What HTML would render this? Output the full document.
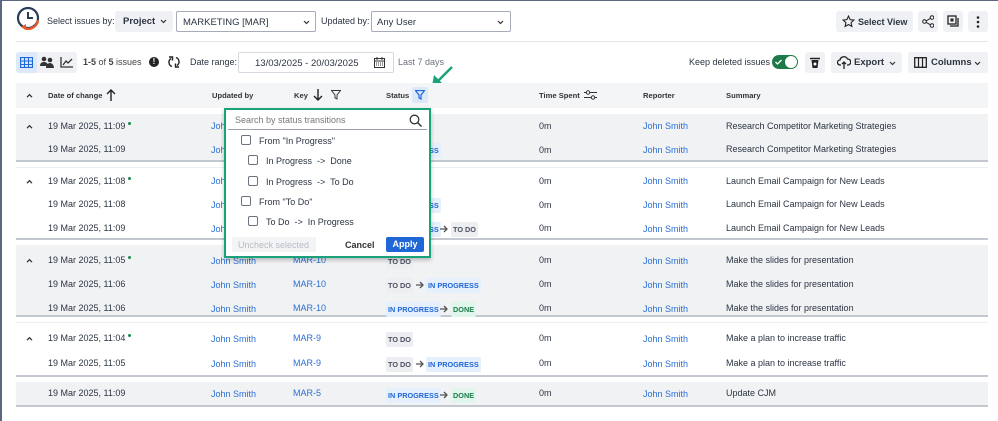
<!DOCTYPE html>
<html><head><meta charset="utf-8"><style>
*{box-sizing:border-box;margin:0;padding:0}
body{width:998px;height:421px;overflow:hidden;background:#fff;font-family:"Liberation Sans",sans-serif;color:#2b3442;font-size:9px;position:relative}
.a{position:absolute;white-space:nowrap}
.btn{position:absolute;background:#f0f1f4;border-radius:3px}
.sel{position:absolute;border:1px solid #a6acb8;border-radius:2px;background:#fff;height:21px}
.g{position:absolute;left:16px;width:972px;border-bottom:2px solid #c3c7cf}
.gray{background:#f1f2f4}
.lnk{color:#2a6fd6}
.b{position:absolute;font-size:7.3px;font-weight:bold;padding:3px 2px;border-radius:2px;white-space:nowrap;line-height:9px}
.td{background:#eceef1;color:#4a5160}
.ip{background:#e6f0fd;color:#1f66d6}
.dn{background:#e1f6ea;color:#1b7e4b}
.dot{display:inline-block;width:3px;height:3px;border-radius:50%;background:#1b8a4f;vertical-align:top;margin-left:3px;margin-top:1px}
.chev{position:absolute}
.h{position:absolute;font-size:7.6px;font-weight:bold;color:#333;white-space:nowrap}
.cb{display:inline-block;width:10px;height:10px;border:1.3px solid #6b7280;border-radius:2px;vertical-align:-1px;margin-right:8px}
.ar{position:absolute}
</style></head><body>
<div class="a" style="left:0;top:0;width:2px;height:421px;background:#5d6780"></div>
<div class="a" style="left:0;top:0;width:998px;height:1px;background:#5d6780"></div>
<svg width="0" height="0" style="position:absolute"><defs>
<symbol id="arr" viewBox="0 0 10 10"><path d="M1 5h7M5 2l3 3-3 3" fill="none" stroke="#555" stroke-width="1.3"/></symbol>
<symbol id="chv" viewBox="0 0 8 6"><path d="M1 5l3-3 3 3" fill="none" stroke="#333" stroke-width="1.5"/></symbol>
</defs></svg>
<!-- logo -->
<svg class="a" style="left:15px;top:6px" width="28" height="28" viewBox="0 0 28 28"><circle cx="13" cy="12" r="10" fill="none" stroke="#2b3b5c" stroke-width="2.2"/><path d="M13 6v6h5" fill="none" stroke="#2b3b5c" stroke-width="2"/><path d="M23 14 A10 10 0 0 1 9 22" fill="none" stroke="#e8582a" stroke-width="2.4"/><path d="M6 21l5-3v6z" fill="#e8582a"/></svg>
<div class="a" style="left:47px;top:16px">Select issues by:</div>
<div class="btn" style="left:115px;top:11px;width:58px;height:21px"><span class="a" style="left:8px;top:5px;font-weight:bold;font-size:9.5px">Project</span><svg class="a" style="left:45px;top:8px" width="7" height="5"><path d="M1 1l2.5 2.5L6 1" fill="none" stroke="#333" stroke-width="1.2"/></svg></div>
<div class="sel" style="left:176px;top:11px;width:140px"><span class="a" style="left:6px;top:5px;font-size:9.5px">MARKETING [MAR]</span><svg class="a" style="left:126px;top:8px" width="7" height="5"><path d="M1 1l2.5 2.5L6 1" fill="none" stroke="#333" stroke-width="1.2"/></svg></div>
<div class="a" style="left:321px;top:16px">Updated by:</div>
<div class="sel" style="left:371px;top:11px;width:140px"><span class="a" style="left:5px;top:5px;font-size:9.5px">Any User</span><svg class="a" style="left:125px;top:8px" width="7" height="5"><path d="M1 1l2.5 2.5L6 1" fill="none" stroke="#333" stroke-width="1.2"/></svg></div>
<div class="btn" style="left:836px;top:11px;width:77px;height:21px"><svg class="a" style="left:6px;top:4px" width="13" height="13" viewBox="0 0 24 24"><path d="M12 2l3 6.5 7 .8-5.2 4.8 1.4 7L12 17.6 5.8 21.1l1.4-7L2 9.3l7-.8z" fill="none" stroke="#222" stroke-width="2"/></svg><span class="a" style="left:22px;top:6px;font-weight:bold">Select View</span></div>
<div class="btn" style="left:918px;top:11px;width:20px;height:21px"><svg class="a" style="left:4px;top:4px" width="12" height="13"><circle cx="10" cy="2.5" r="1.8" fill="none" stroke="#222"/><circle cx="2.5" cy="6.5" r="1.8" fill="none" stroke="#222"/><circle cx="10" cy="10.5" r="1.8" fill="none" stroke="#222"/><path d="M4 6L8.5 3.3M4 7.3L8.5 9.8" stroke="#222"/></svg></div>
<div class="btn" style="left:943px;top:11px;width:20px;height:21px"><svg class="a" style="left:4px;top:4px" width="12" height="13"><rect x="1" y="1" width="8" height="8" fill="none" stroke="#222" stroke-width="1.3"/><path d="M11 3v8H3" fill="none" stroke="#222" stroke-width="1.3"/><rect x="3.5" y="3.5" width="3" height="3" fill="#222"/></svg></div>
<div class="btn" style="left:968px;top:11px;width:20px;height:21px"><svg class="a" style="left:8px;top:5px" width="4" height="12"><circle cx="2" cy="1.5" r="1.3" fill="#222"/><circle cx="2" cy="6" r="1.3" fill="#222"/><circle cx="2" cy="10.5" r="1.3" fill="#222"/></svg></div>
<div class="a" style="left:16px;top:41px;width:972px;height:1px;background:#e4e6ea"></div>
<!-- toolbar 2 -->
<div class="btn" style="left:16px;top:52px;width:61px;height:21px"></div>
<div class="a" style="left:16px;top:52px;width:21px;height:21px;background:#dde8fb;border-radius:3px"></div>
<svg class="a" style="left:20px;top:57px" width="13" height="11"><rect x="0.5" y="0.5" width="12" height="10" fill="none" stroke="#1f66d6" stroke-width="1.2"/><path d="M4.5 0v11M8.5 0v11M0 4h13M0 7.5h13" stroke="#1f66d6"/></svg>
<svg class="a" style="left:40px;top:56px" width="14" height="12"><circle cx="4" cy="3" r="2.3" fill="#333"/><circle cx="10" cy="4" r="2.3" fill="#333"/><path d="M0 10c0-3 2-4 4-4s4 1 4 4zM6 12c0-3 2-5 4-5s4 2 4 5z" fill="#333"/></svg>
<svg class="a" style="left:60px;top:57px" width="13" height="11"><path d="M1 0v10h12" fill="none" stroke="#333" stroke-width="1.3"/><path d="M3 8l3-4 2 2 4-4" fill="none" stroke="#333" stroke-width="1.3"/></svg>
<div class="a" style="left:83px;top:57px;color:#444"><b>1-5</b> of <b>5</b> issues</div>
<div class="a" style="left:149px;top:57px;width:10px;height:10px;border-radius:50%;background:#222;color:#fff;font-size:8px;text-align:center;line-height:10px;font-weight:bold">!</div>
<svg class="a" style="left:168px;top:56px" width="12" height="12"><path d="M3 2.5A4.5 4.5 0 0 0 4 10.5M9 9.5A4.5 4.5 0 0 0 8 1.5" fill="none" stroke="#222" stroke-width="1.4"/><path d="M1 1h3.5v3.5M11 11H7.5V7.5" fill="none" stroke="#222" stroke-width="1.4"/></svg>
<div class="a" style="left:190px;top:57px">Date range:</div>
<div class="sel" style="left:238px;top:52px;width:156px;height:21px;border-color:#d6d9df"><span class="a" style="left:16px;top:5px;font-size:9.5px">13/03/2025 - 20/03/2025</span><svg class="a" style="left:135px;top:4px" width="11" height="11"><rect x="0.5" y="1.5" width="10" height="9" fill="none" stroke="#333"/><path d="M0 4h11M3 0v3M8 0v3" stroke="#333"/><path d="M2 6h7M2 8h7" stroke="#333" stroke-dasharray="1 1"/></svg></div>
<div class="a" style="left:398px;top:57px;color:#6b7280">Last 7 days</div>
<svg class="a" style="left:428px;top:64px" width="28" height="26"><path d="M24 3L10 17" stroke="#1aa37a" stroke-width="2.5"/><path d="M4 22l11-2-9-9z" fill="#1aa37a"/></svg>
<div class="a" style="left:689px;top:57px">Keep deleted issues</div>
<div class="a" style="left:772px;top:55px;width:26px;height:14px;border-radius:7px;background:#1f7a4a"><svg class="a" style="left:3px;top:4px" width="7" height="6"><path d="M0.5 3l2 2 4-4" fill="none" stroke="#fff" stroke-width="1.3"/></svg><span class="a" style="left:13px;top:1px;width:12px;height:12px;border-radius:50%;background:#fff"></span></div>
<div class="btn" style="left:805px;top:52px;width:20px;height:21px"><svg class="a" style="left:5px;top:5px" width="10" height="11"><path d="M0 1.5h10" stroke="#222" stroke-width="1.5"/><path d="M1.5 3h7l-1 8h-5z" fill="#222"/><circle cx="5" cy="7" r="1.5" fill="#fff"/></svg></div>
<div class="btn" style="left:831px;top:52px;width:71px;height:21px"><svg class="a" style="left:6px;top:4px" width="14" height="13"><path d="M4 9H3a2.5 2.5 0 0 1 0-5 4 4 0 0 1 7.5-1A3 3 0 0 1 11 9h-1" fill="none" stroke="#222" stroke-width="1.3"/><path d="M7 6v7M5 8l2-2 2 2" fill="none" stroke="#222" stroke-width="1.3"/></svg><span class="a" style="left:23px;top:5px;font-weight:bold;font-size:9.5px">Export</span><svg class="a" style="left:58px;top:9px" width="7" height="5"><path d="M1 1l2.5 2.5L6 1" fill="none" stroke="#333" stroke-width="1.2"/></svg></div>
<div class="btn" style="left:908px;top:52px;width:80px;height:21px"><svg class="a" style="left:6px;top:5px" width="13" height="11"><rect x="0.7" y="0.7" width="11.6" height="9.6" fill="none" stroke="#222" stroke-width="1.3"/><path d="M4.5 0v11M8.5 0v11" stroke="#222" stroke-width="1.2"/></svg><span class="a" style="left:23px;top:5px;font-weight:bold;font-size:9.5px">Columns</span><svg class="a" style="left:66px;top:9px" width="7" height="5"><path d="M1 1l2.5 2.5L6 1" fill="none" stroke="#333" stroke-width="1.2"/></svg></div>
<!-- header -->
<div class="a" style="left:16px;top:83px;width:972px;height:25px;background:#f4f5f7"></div>
<svg class="chev" style="left:26px;top:93px" width="7" height="5" viewBox="0 0 8 6"><use href="#chv"/></svg>
<div class="h" style="left:48px;top:91px">Date of change</div>
<svg class="a" style="left:106px;top:89px" width="10" height="12"><path d="M5 12V1M1 5l4-4 4 4" fill="none" stroke="#222" stroke-width="1.4"/></svg>
<div class="h" style="left:212px;top:91px">Updated by</div>
<div class="h" style="left:294px;top:91px">Key</div>
<svg class="a" style="left:313px;top:89px" width="10" height="12"><path d="M5 0v11M1 7l4 4 4-4" fill="none" stroke="#222" stroke-width="1.4"/></svg>
<svg class="a" style="left:331px;top:90px" width="10" height="10"><path d="M0.5 0.5h9L6 5v4L4 8V5z" fill="none" stroke="#333"/></svg>
<div class="h" style="left:386px;top:91px">Status</div>
<div class="a" style="left:412px;top:87px;width:16px;height:16px;background:#dde8fb;border-radius:2px"></div>
<svg class="a" style="left:415px;top:90px" width="10" height="10"><path d="M0.5 0.5h9L6 5v4L4 8V5z" fill="none" stroke="#1f66d6" stroke-width="1.2"/></svg>
<div class="h" style="left:539px;top:91px">Time Spent</div>
<svg class="a" style="left:584px;top:90px" width="13" height="10"><path d="M0 2.5h13M0 7.5h13" stroke="#333"/><circle cx="4" cy="2.5" r="1.7" fill="#fff" stroke="#333"/><circle cx="9" cy="7.5" r="1.7" fill="#fff" stroke="#333"/></svg>
<div class="h" style="left:643px;top:91px">Reporter</div>
<div class="h" style="left:726px;top:91px">Summary</div>
<!-- groups -->
<div class="g gray" style="top:114px;height:48px"></div>
<div class="g" style="top:167px;height:73px;border-top:1px solid #eceef1"></div>
<div class="g gray" style="top:245px;height:72px"></div>
<div class="g" style="top:322px;height:55px;border-top:1px solid #eceef1"></div>
<div class="g gray" style="top:382px;height:25px"></div>

<svg class="chev" style="left:26px;top:124px" width="7" height="5" viewBox="0 0 8 6"><use href="#chv"/></svg>
<div class="a" style="left:48px;top:121px">19 Mar 2025, 11:09<span class="dot"></span></div><div class="a lnk" style="left:211px;top:121px">John Smith</div><div class="a" style="left:539px;top:121px">0m</div><div class="a lnk" style="left:643px;top:121px">John Smith</div><div class="a" style="left:726px;top:121px">Research Competitor Marketing Strategies</div>
<div class="a" style="left:48px;top:144px">19 Mar 2025, 11:09</div><div class="a lnk" style="left:211px;top:145px">John Smith</div><span class="b ip" style="left:386px;top:143px">IN PROGRESS</span><div class="a" style="left:539px;top:145px">0m</div><div class="a lnk" style="left:643px;top:145px">John Smith</div><div class="a" style="left:726px;top:144px">Research Competitor Marketing Strategies</div>

<svg class="chev" style="left:26px;top:179px" width="7" height="5" viewBox="0 0 8 6"><use href="#chv"/></svg>
<div class="a" style="left:48px;top:176px">19 Mar 2025, 11:08<span class="dot"></span></div><div class="a lnk" style="left:211px;top:176px">John Smith</div><div class="a" style="left:539px;top:176px">0m</div><div class="a lnk" style="left:643px;top:176px">John Smith</div><div class="a" style="left:726px;top:176px">Launch Email Campaign for New Leads</div>
<div class="a" style="left:48px;top:199px">19 Mar 2025, 11:08</div><div class="a lnk" style="left:211px;top:200px">John Smith</div><span class="b ip" style="left:386px;top:198px">IN PROGRESS</span><div class="a" style="left:539px;top:200px">0m</div><div class="a lnk" style="left:643px;top:200px">John Smith</div><div class="a" style="left:726px;top:199px">Launch Email Campaign for New Leads</div>
<div class="a" style="left:48px;top:223px">19 Mar 2025, 11:09</div><div class="a lnk" style="left:211px;top:224px">John Smith</div><span class="b ip" style="left:386px;top:222px">IN PROGRESS</span><svg class="ar" style="left:439px;top:224px" width="10" height="10"><use href="#arr"/></svg><span class="b td" style="left:451px;top:222px">TO DO</span><div class="a" style="left:539px;top:223px">0m</div><div class="a lnk" style="left:643px;top:224px">John Smith</div><div class="a" style="left:726px;top:223px">Launch Email Campaign for New Leads</div>

<svg class="chev" style="left:26px;top:258px" width="7" height="5" viewBox="0 0 8 6"><use href="#chv"/></svg>
<div class="a" style="left:48px;top:255px">19 Mar 2025, 11:05<span class="dot"></span></div><div class="a lnk" style="left:211px;top:256px">John Smith</div><div class="a lnk" style="left:293px;top:255px">MAR-10</div><span class="b td" style="left:386px;top:254px">TO DO</span><div class="a" style="left:539px;top:255px">0m</div><div class="a lnk" style="left:643px;top:256px">John Smith</div><div class="a" style="left:726px;top:255px">Make the slides for presentation</div>
<div class="a" style="left:48px;top:279px">19 Mar 2025, 11:06</div><div class="a lnk" style="left:211px;top:280px">John Smith</div><div class="a lnk" style="left:293px;top:279px">MAR-10</div><span class="b td" style="left:386px;top:278px">TO DO</span><svg class="ar" style="left:415px;top:280px" width="10" height="10"><use href="#arr"/></svg><span class="b ip" style="left:426px;top:278px">IN PROGRESS</span><div class="a" style="left:539px;top:279px">0m</div><div class="a lnk" style="left:643px;top:280px">John Smith</div><div class="a" style="left:726px;top:279px">Make the slides for presentation</div>
<div class="a" style="left:48px;top:303px">19 Mar 2025, 11:06</div><div class="a lnk" style="left:211px;top:304px">John Smith</div><div class="a lnk" style="left:293px;top:303px">MAR-10</div><span class="b ip" style="left:386px;top:302px">IN PROGRESS</span><svg class="ar" style="left:439px;top:304px" width="10" height="10"><use href="#arr"/></svg><span class="b dn" style="left:451px;top:302px">DONE</span><div class="a" style="left:539px;top:303px">0m</div><div class="a lnk" style="left:643px;top:304px">John Smith</div><div class="a" style="left:726px;top:303px">Make the slides for presentation</div>

<svg class="chev" style="left:26px;top:336px" width="7" height="5" viewBox="0 0 8 6"><use href="#chv"/></svg>
<div class="a" style="left:48px;top:333px">19 Mar 2025, 11:04<span class="dot"></span></div><div class="a lnk" style="left:211px;top:334px">John Smith</div><div class="a lnk" style="left:293px;top:333px">MAR-9</div><span class="b td" style="left:386px;top:332px">TO DO</span><div class="a" style="left:539px;top:333px">0m</div><div class="a lnk" style="left:643px;top:334px">John Smith</div><div class="a" style="left:726px;top:333px">Make a plan to increase traffic</div>
<div class="a" style="left:48px;top:358px">19 Mar 2025, 11:05</div><div class="a lnk" style="left:211px;top:359px">John Smith</div><div class="a lnk" style="left:293px;top:358px">MAR-9</div><span class="b td" style="left:386px;top:357px">TO DO</span><svg class="ar" style="left:415px;top:359px" width="10" height="10"><use href="#arr"/></svg><span class="b ip" style="left:426px;top:357px">IN PROGRESS</span><div class="a" style="left:539px;top:358px">0m</div><div class="a lnk" style="left:643px;top:359px">John Smith</div><div class="a" style="left:726px;top:358px">Make a plan to increase traffic</div>

<div class="a" style="left:48px;top:388px">19 Mar 2025, 11:09</div><div class="a lnk" style="left:211px;top:389px">John Smith</div><div class="a lnk" style="left:293px;top:388px">MAR-5</div><span class="b ip" style="left:386px;top:388px">IN PROGRESS</span><svg class="ar" style="left:439px;top:390px" width="10" height="10"><use href="#arr"/></svg><span class="b dn" style="left:451px;top:388px">DONE</span><div class="a" style="left:539px;top:388px">0m</div><div class="a lnk" style="left:643px;top:389px">John Smith</div><div class="a" style="left:726px;top:388px">Update CJM</div>

<!-- popup -->
<div class="a" style="left:224px;top:108px;width:207px;height:150px;background:#fff;border:2px solid #1aa37a;box-shadow:0 2px 4px rgba(0,0,0,.25)">
<div class="a" style="left:2px;top:1px;width:199px;height:19px;border-bottom:1px solid #9aa1ad"><span class="a" style="left:7px;top:4px;color:#777">Search by status transitions</span><svg class="a" style="left:181px;top:3px" width="13" height="13"><circle cx="5.5" cy="5.5" r="4.3" fill="none" stroke="#333" stroke-width="1.3"/><path d="M8.5 8.5l4 4" stroke="#333" stroke-width="1.4"/></svg></div>
<div class="a" style="left:15px;top:25px"><span class="cb"></span>From "In Progress"</div>
<div class="a" style="left:22px;top:45px"><span class="cb"></span>In Progress &nbsp;-&gt;&nbsp; Done</div>
<div class="a" style="left:22px;top:66px"><span class="cb"></span>In Progress &nbsp;-&gt;&nbsp; To Do</div>
<div class="a" style="left:15px;top:86px"><span class="cb"></span>From "To Do"</div>
<div class="a" style="left:22px;top:106px"><span class="cb"></span>To Do &nbsp;-&gt;&nbsp; In Progress</div>
<div class="a" style="left:6px;top:127px;width:84px;height:15px;background:#f3f4f6;color:#b8bcc4;padding:3px 6px">Uncheck selected</div>
<div class="a" style="left:119px;top:130px;font-weight:bold;color:#333">Cancel</div>
<div class="a" style="left:160px;top:127px;width:38px;height:15px;background:#1f66d6;color:#fff;border-radius:2px;font-weight:bold;text-align:center;line-height:15px">Apply</div>
</div>
</body></html>
